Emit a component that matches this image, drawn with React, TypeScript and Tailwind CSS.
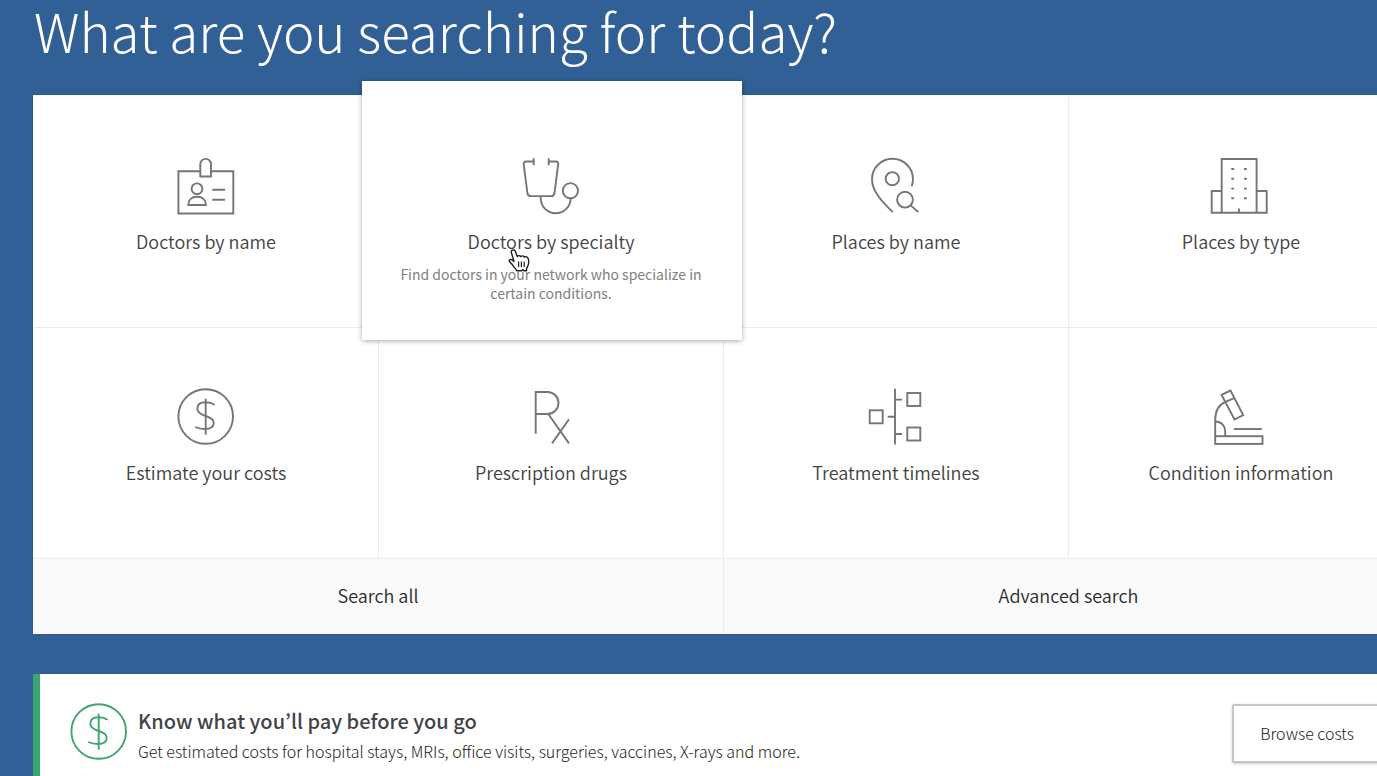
import type { ReactNode } from "react";

type Tile = {
  label: string;
  icon: ReactNode;
  description?: string;
};

function Icon({ children }: { children: ReactNode }) {
  return (
    <svg
      viewBox="0 0 58 58"
      className="h-[58px] w-[58px] shrink-0 overflow-visible"
      fill="none"
      stroke="currentColor"
      strokeWidth={1.9}
      aria-hidden="true"
    >
      {children}
    </svg>
  );
}

function BadgeIcon() {
  return (
    <Icon>
      <path d="M23.3 14.3H1.4V56.5H56.3V14.3H34" />
      <path d="M23.3 19.5V7.2a5.35 5.35 0 0 1 10.7 0V19.5Z" />
      <circle cx="20" cy="31.8" r="5.4" />
      <path d="M11.3 48c0-5.2 3.6-8.3 8.8-8.3s8.8 3.1 8.8 8.3Z" />
      <path d="M35.3 32.7H48M35.3 42.7H48" />
    </Icon>
  );
}

function StethoscopeIcon() {
  return (
    <Icon>
      <path d="M11.7 1.3V8.2M26.7 1.3V8.2" />
      <path d="M11.7 4.5H4.2Q1.5 4.5 1.7 7.2L5.4 36Q5.9 39.1 9 39.1H29Q32 39.1 32.5 36L36.2 7.2Q36.4 4.5 33.7 4.5H26.7" />
      <path d="M18.7 39.1V41.3a15 15 0 0 0 30 0" />
      <circle cx="48.4" cy="33.7" r="7.6" />
    </Icon>
  );
}

function PinSearchIcon() {
  return (
    <Icon>
      <path d="M44.7 29.2Q46 25.4 46 22.2A20.5 20.5 0 0 0 5 22.2C5 34.4 15 44.4 25.7 55.1" />
      <circle cx="25.3" cy="21.7" r="6.6" />
      <circle cx="38" cy="42.7" r="7.9" />
      <path d="M43.7 48.4 51.3 55.1" />
    </Icon>
  );
}

function BuildingIcon() {
  return (
    <Icon>
      <path d="M9.7 55.8V2H44.6V55.8" />
      <path d="M9.7 34H-.3V55.8H54.7V34H44.6" />
      <path d="M27 51.4V55.4" />
      <path d="M19.3 12h2.8M19.3 21.7h2.8M19.3 31.6h2.8M19.3 41.3h2.8M32 12h2.8M32 21.7h2.8M32 31.6h2.8M32 41.3h2.8" />
    </Icon>
  );
}

function DollarIcon() {
  return (
    <Icon>
      <circle cx="28.7" cy="28.5" r="27.3" />
      <path d="M28.7 10.7V46.7" />
      <path d="M37.7 16.7C35 15 32 14.3 28.7 14.3C23.5 14.3 20.3 16.7 20.3 20.7C20.3 24.5 23.5 26.3 28.7 28C33.5 29.5 36.7 31 36.7 34.7C36.7 39 33.5 41 28 41C24.5 41 21 40.3 18.3 39" />
    </Icon>
  );
}

function RxIcon() {
  return (
    <Icon>
      <path d="M13.7 45.7V4H25.5a11 11 0 0 1 0 22H13.7" />
      <path d="M26.3 26 47 55.4M47 31.3 30 55.4" />
    </Icon>
  );
}

function TimelineIcon() {
  return (
    <Icon>
      <path d="M28 .8V56.4M28 11.6H35M20.7 28.8H28M28 46H35" />
      <rect x="2.7" y="22.3" width="13" height="13" />
      <rect x="40.3" y="5" width="13" height="13" />
      <rect x="40.3" y="39.5" width="13" height="13" />
    </Icon>
  );
}

function MicroscopeIcon() {
  return (
    <Icon>
      <rect x="3.2" y="48.2" width="47.3" height="7.7" />
      <path d="M21.8 41H49.8" />
      <path d="M3.2 48V32C3.2 23.5 7 16.6 13.5 13.9L22.8 9.9" />
      <path d="M3.2 33.5C9.500 33.5 13.2 38 13.2 43.5V48" />
      <path d="M9.5 6.8 18.5 2.6 31.2 27 22.5 31.5Z" />
    </Icon>
  );
}

function HandCursor() {
  return (
    <svg viewBox="0 0 22 24" className="absolute top-[168px] left-[146px] h-6 w-[22px]" aria-hidden="true">
      <path
        d="M4.2 1.2C5.4.5 6.8 1 7.3 2.3L9.3 7.6C9.8 6.4 12 6.3 12.7 7.6C13.6 6.5 15.7 6.7 16.3 8.1C17.6 7.2 19.7 7.8 20.2 9.6C20.9 12 20.8 14.5 20 16.5C19.4 18.2 18.6 18.7 18.5 20.2V21.8H16L15 20.6L13.6 21.8H8.8C8.4 20.3 6.3 18.6 5.3 17.1C4.2 15.4 2.6 13.7 1.5 12.5C.5 11.2 2.2 9.8 3.9 10.8L6 12.4L3.5 4C3.1 2.8 3.3 1.7 4.2 1.2Z"
        fill="#fff"
        stroke="#1c1c1c"
        strokeWidth="1.4"
        strokeLinejoin="round"
      />
      <path d="M10.6 12.5V18M13.4 12.5V18M16.2 12.5V18" stroke="#1c1c1c" strokeWidth="1.2" />
    </svg>
  );
}

const TILES: Tile[] = [
  { label: "Doctors by name", icon: <BadgeIcon /> },
  {
    label: "Doctors by specialty",
    icon: <StethoscopeIcon />,
    description: "Find doctors in your network who specialize in certain conditions.",
  },
  { label: "Places by name", icon: <PinSearchIcon /> },
  { label: "Places by type", icon: <BuildingIcon /> },
  { label: "Estimate your costs", icon: <DollarIcon /> },
  { label: "Prescription drugs", icon: <RxIcon /> },
  { label: "Treatment timelines", icon: <TimelineIcon /> },
  { label: "Condition information", icon: <MicroscopeIcon /> },
];

function SearchTile({ tile }: { tile: Tile }) {
  return (
    <a
      href="#"
      className="flex h-[231px] flex-col items-center border-t border-l border-[#ebebeb] bg-white pt-[60px] text-[#757575] nth-[-n+4]:border-t-white nth-[4n+1]:border-l-white"
    >
      {tile.icon}
      <span className="mt-3 text-[18px] leading-7 font-[350] text-[#424242]">{tile.label}</span>
    </a>
  );
}

// the hovered tile grows past its grid cell on every side
function ActiveTile({ tile }: { tile: Tile }) {
  return (
    <a
      href="#"
      className="relative z-10 -mt-[15px] -mr-[19px] -mb-[13px] -ml-4 flex flex-col items-center bg-white pt-[76px] pr-[2px] text-[#757575] shadow-[0_1px_5px_rgba(0,0,0,0.35)]"
    >
      {tile.icon}
      <span className="mt-3 text-[18px] leading-7 font-[350] text-[#424242]">{tile.label}</span>
      <span className="mt-[10px] w-[320px] text-center text-[14px] leading-[19px] text-[#808080]">{tile.description}</span>
      <HandCursor />
    </a>
  );
}

export default function App() {
  return (
    <div className="min-h-screen overflow-hidden bg-[#306096] font-['Noto_Sans_CJK_KR','Noto_Sans',sans-serif]">
      <main className="-mr-9 ml-[33px]">
        <h1 className="h-[95px] pl-px text-[53px] leading-[60px] font-light whitespace-nowrap text-white">
          What are you searching for today?
        </h1>

        <nav aria-label="Search categories" className="bg-white pt-px shadow-[0_0_1px_rgba(0,0,0,0.4)]">
          <div className="grid grid-cols-4">
            {TILES.map((tile) =>
              tile.description ? <ActiveTile key={tile.label} tile={tile} /> : <SearchTile key={tile.label} tile={tile} />,
            )}
          </div>
          <div className="grid h-[76px] grid-cols-2 border-t border-[#ebebeb] bg-[#fafafa] text-center text-[18px] leading-[73px] font-[350] text-[#2a2a2a]">
            <a href="#">Search all</a>
            <a href="#" className="border-l border-[#ebebeb]">
              Advanced search
            </a>
          </div>
        </nav>

        <section className="mt-10 flex items-start border-l-[7px] border-[#3ba671] bg-white pt-[29px] pr-[31px] pb-8 pl-[30px]">
          <div className="text-[#3ba671]">
            <DollarIcon />
          </div>
          <div className="ml-[10px] flex-1">
            <h2 className="text-[20px] leading-[36px] font-medium text-[#414446]">Know what you’ll pay before you go</h2>
            <p className="text-[16px] leading-6 font-light text-[#222]">
              Get estimated costs for hospital stays, MRIs, office visits, surgeries, vaccines, X-rays and more.
            </p>
          </div>
          <button
            type="button"
            className="mt-px rounded-[2px] border-2 border-[#c3c5ca] bg-white px-[26px] text-[16px] leading-[55px] font-light whitespace-nowrap text-[#222] shadow-[0_1px_3px_rgba(0,0,0,0.2)]"
          >
            Browse costs
          </button>
        </section>
      </main>
    </div>
  );
}
